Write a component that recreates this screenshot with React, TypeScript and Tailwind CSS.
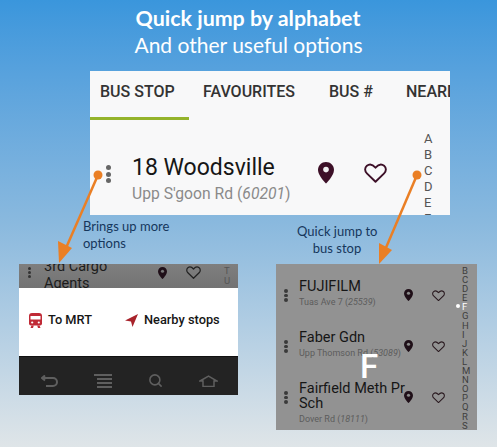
import { Search } from "lucide-react";

const ROBOTO = "font-['Roboto',sans-serif]";

function Dots({ className }: { className: string }) {
  return (
    <div className={`flex shrink-0 flex-col ${className}`}>
      <span className="size-[5px] rounded-full bg-current" />
      <span className="size-[5px] rounded-full bg-current" />
      <span className="size-[5px] rounded-full bg-current" />
    </div>
  );
}

function Pin({ size, hole, color = "#1f0f18" }: { size: number; hole: string; color?: string }) {
  return (
    <svg width={size} height={size * 1.35} viewBox="0 0 20 27" className="shrink-0">
      <path d="M10 0C4.500 0 0 4.400 0 10c0 7 10 17 10 17s10-10 10-17C20 4.400 15.500 0 10 0z" fill={color} />
      <circle cx="10" cy="9.500" r="3.500" fill={hole} />
    </svg>
  );
}

function Heart({ size, color }: { size: number; color: string }) {
  return (
    <svg width={size} height={size * 0.88} viewBox="0 0 24 21" fill="none" className="shrink-0">
      <path
        d="M12 19.500 3 10.800C.5 8.300.7 4.700 3 2.800c2.500-2 6-1.500 9 2 3-3.500 6.500-4 9-2 2.300 1.900 2.500 5.500 0 8z"
        stroke={color}
        strokeWidth="2"
        strokeLinejoin="round"
      />
    </svg>
  );
}

function StopRow({ name, road, code }: { name: string[]; road: string; code: string }) {
  return (
    <div className="flex h-[51px] items-start">
      <Dots className="mt-[15px] ml-[8px] w-[4px] gap-[1px] text-[#3a3a3a] [&>span]:size-[3.500px]" />
      <div className="ml-[11px] w-[102px] shrink-0 pt-[5px]">
        {name.map((line) => (
          <p key={line} className="whitespace-nowrap text-[14.500px] leading-[15px] text-[#161616]">
            {line}
          </p>
        ))}
        <p className="mt-[2px] whitespace-nowrap text-[9px] leading-[12px] text-[#5c5c5c]">
          {road} (<i>{code}</i>)
        </p>
      </div>
      <div className="mt-[15px] ml-[3px]">
        <Pin size={9} hole="#8b8b8b" />
      </div>
      <div className="mt-[16px] ml-[19px]">
        <Heart size={13} color="#2a1a20" />
      </div>
    </div>
  );
}

export default function App() {
  return (
    <div className="relative h-[447px] w-[497px] overflow-hidden bg-gradient-to-b from-[#3a96dc] via-[#8ab9de] via-50% to-[#dfe5e8] font-['Lato',sans-serif]">
      <header className="pt-[6px] text-center text-white">
        <h1 className="ml-[-1px] text-[21.400px] leading-[25px] font-bold">Quick jump by alphabet</h1>
        <p className="text-[21px] leading-[27px]">And other useful options</p>
      </header>

      {/* main screen crop */}
      <section className={`mt-[13px] ml-[90px] h-[144px] w-[360px] overflow-hidden bg-[#f8f8f9] ${ROBOTO}`}>
        <div className="flex h-[46px] items-start whitespace-nowrap pt-[12px] text-[16px] leading-[18px] font-medium text-[#333] [&>span]:shrink-0">
          <span className="ml-[10px] w-[103px]">BUS STOP</span>
          <span className="w-[126px]">FAVOURITES</span>
          <span className="w-[77px]">BUS #</span>
          <span>NEARBY</span>
        </div>
        <div className="h-[3px] w-[99px] bg-[#94b32b]" />
        <div className="flex items-start">
          <Dots className="mt-[45px] ml-[16px] gap-[1.500px] text-[#666]" />
          <div className="ml-[21px] w-[172px] shrink-0 pt-[33px]">
            <p className="whitespace-nowrap text-[23px] leading-[30px] text-[#161616]">18 Woodsville</p>
            <p className="whitespace-nowrap text-[15.700px] leading-[22px] text-[#8a8a8a]">
              Upp S'goon Rd (<i>60201</i>)
            </p>
          </div>
          <div className="mt-[42px] ml-[14px]">
            <Pin size={16} hole="#f0f0f0" color="#3d1028" />
          </div>
          <div className="mt-[43px] ml-[30px]">
            <Heart size={23} color="#3d1028" />
          </div>
          <div className="mt-[11px] ml-[37px] text-[13px] leading-[16px] text-[#555]">
            {["A", "B", "C", "D", "E", "F"].map((letter) => (
              <p key={letter}>{letter}</p>
            ))}
          </div>
        </div>
      </section>

      <div className="flex items-start">
        <div className="ml-[19px] w-[219px]">
          <p className="ml-[64px] h-[49px] pt-[3px] text-[13px] leading-[17px] text-[#16375c]">
            Brings up more
            <br />
            options
          </p>
          {/* options popup crop */}
          <section className={`h-[131px] overflow-hidden ${ROBOTO}`}>
            <div className="flex h-[24px] items-start overflow-hidden bg-gradient-to-b from-[#7f7f7f] to-[#737373]">
              <Dots className="mt-[3px] ml-[9px] gap-[1px] text-[#333] [&>span]:size-[3px]" />
              <p className="-mt-[6px] ml-[13px] w-[114px] shrink-0 text-[14.500px] leading-[17px] text-[#1c1c1c]">
                3rd Cargo
                <br />
                Agents
              </p>
              <div className="mt-[3px]">
                <Pin size={9} hole="#777" />
              </div>
              <div className="mt-[2px] ml-[19px]">
                <Heart size={15} color="#222" />
              </div>
              <p className="mt-[2px] ml-[23px] text-[9.500px] leading-[10px] text-[#555]">
                T
                <br />U
              </p>
            </div>
            <div className="flex h-[68px] items-center bg-white pb-[4px] text-[12.800px] font-medium text-[#161616]">
              <svg width="13" height="15" viewBox="0 0 13 15" className="ml-[10px] shrink-0">
                <path d="M3 0h7a3 3 0 0 1 3 3v7.500a2 2 0 0 1-2 2H2a2 2 0 0 1-2-2V3a3 3 0 0 1 3-3z" fill="#c02a36" />
                <rect x="1.500" y="3" width="10" height="3.500" fill="#fff" />
                <circle cx="3.200" cy="9.500" r="1.100" fill="#fff" />
                <circle cx="9.800" cy="9.500" r="1.100" fill="#fff" />
                <path d="M2.500 12.500 1.500 15H4l.8-2.500zM10.500 12.500l1 2.500H9l-.8-2.500z" fill="#c02a36" />
              </svg>
              <span className="ml-[6px] w-[77px]">To MRT</span>
              <svg width="13" height="13" viewBox="0 0 13 13" className="shrink-0">
                <path d="M13 0 0 6.500l6 1 1.500 5.500z" fill="#a8232b" />
              </svg>
              <span className="ml-[6px] whitespace-nowrap">Nearby stops</span>
            </div>
            <div className="flex h-[39px] items-center border-t border-[#111] bg-[#232323] pt-[9px] text-[#5f5f5f]">
              <svg width="17" height="12" viewBox="0 0 17 12" fill="none" stroke="currentColor" strokeWidth="2" className="ml-[22px] shrink-0">
                <path d="M1 3h11a3.500 3.500 0 0 1 0 8H5" />
                <path d="M4 .5 1 3l3 2.500" />
              </svg>
              <div className="ml-[36px] flex w-[18px] shrink-0 flex-col items-end gap-[2px]">
                <span className="h-[2px] w-[18px] bg-current" />
                <span className="h-[2px] w-[15px] bg-current" />
                <span className="h-[2px] w-[15px] bg-current" />
                <span className="h-[2px] w-[15px] bg-current" />
              </div>
              <Search size={15} strokeWidth={2.500} className="ml-[36px] shrink-0" />
              <svg width="19" height="12" viewBox="0 0 19 12" fill="none" stroke="currentColor" strokeWidth="1.500" className="ml-[36px] shrink-0">
                <path d="M1 6 9.500 1 18 6h-3v5.500H4V6z" />
              </svg>
            </div>
          </section>
        </div>

        <div className="ml-[38px] w-[201px]">
          <p className="ml-[21px] h-[49px] w-[80px] pt-[8px] text-center text-[13px] leading-[17px] whitespace-nowrap text-[#16375c]">
            Quick jump to
            <br />
            bus stop
          </p>
          {/* alphabet list crop */}
          <section className={`relative flex h-[166px] overflow-hidden bg-[#929292] ${ROBOTO}`}>
            <div className="w-[186px] shrink-0 pt-[10px]">
              <StopRow name={["FUJIFILM"]} road="Tuas Ave 7" code="25539" />
              <StopRow name={["Faber Gdn"]} road="Upp Thomson Rd" code="53089" />
              <StopRow name={["Fairfield Meth Pr", "Sch"]} road="Dover Rd" code="18111" />
            </div>
            <div className="pt-[2px] text-[9.500px] leading-[9.100px] text-[#3e3e3e]">
              {"BCDEFGHIJKLMNOPQRST".split("").map((letter) => (
                <p key={letter} className={letter === "F" ? "text-white" : undefined}>
                  {letter}
                </p>
              ))}
            </div>
            <span className="absolute top-[40px] left-[180px] size-[4px] rounded-full bg-white" />
            <span className="absolute top-[83px] left-[84px] text-[33px] leading-[40px] font-medium text-white">F</span>
          </section>
        </div>
      </div>

      <svg width="497" height="447" viewBox="0 0 497 447" className="pointer-events-none absolute top-0 left-0">
        <g stroke="#ea7f25" strokeWidth="2.500" fill="#ea7f25">
          <line x1="98" y1="175" x2="66" y2="248" />
          <line x1="417" y1="175" x2="385" y2="250" />
        </g>
        <g fill="#ea7f25">
          <circle cx="98" cy="175" r="4.500" />
          <circle cx="417" cy="175" r="4.500" />
          <path d="M59 263 58 241 72 248z" />
          <path d="M379 264 379 243 392 250z" />
        </g>
      </svg>
    </div>
  );
}
